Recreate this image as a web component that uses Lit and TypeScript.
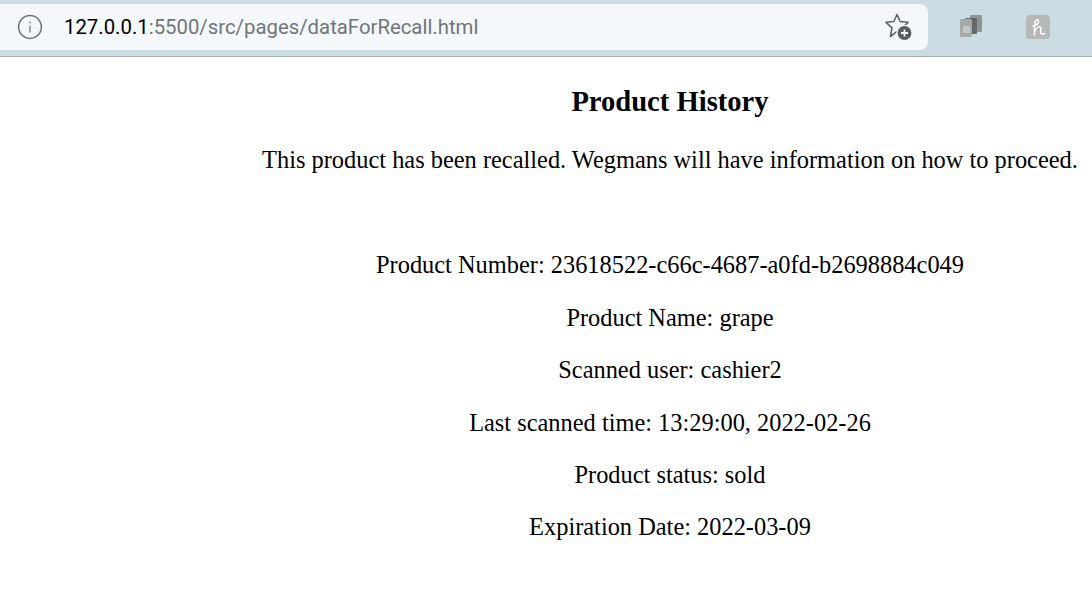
import { LitElement, html, css } from "lit";
import { customElement } from "lit/decorators.js";

@customElement("app-root")
export class AppRoot extends LitElement {
  static styles = css`
    :host { display: block; width: 1092px; height: 596px; overflow: hidden; background: #fff; color: #000; font-family: "Liberation Serif", serif; }
    .chrome { height: 57px; box-sizing: border-box; background: #cbdde2; border-bottom: 1px solid #a3b1b5; padding: 4px 0 6px 0; display: flex; align-items: stretch; }
    .omni { width: 928px; background: #f4f8fa; border-radius: 0 8px 8px 0; display: flex; align-items: center; box-sizing: border-box; padding-left: 17px; }
    .info { width: 26px; height: 26px; flex: none; }
    .url { margin-left: 21px; font-family: "Roboto", "Open Sans", sans-serif; font-size: 20.35px; color: #70757a; flex: 1; }
    .url b { font-weight: 400; color: #000; }
    .star { width: 30px; height: 30px; flex: none; margin-right: 14px; }
    .ext { display: flex; align-items: center; }
    .ext svg { flex: none; }
    .e1 { margin-left: 32px; }
    .e2 { margin-left: 42px; }
    main { margin-left: 248px; text-align: center; }
    h1 { font-size: 28.6px; font-weight: 700; margin: 29px 0 0; line-height: 32px; }
    p { font-size: 24.4px; line-height: 27px; margin: 25.4px 0 0; white-space: nowrap; }
    .lead { margin-top: 28.4px; }
    .gap { margin-top: 78px; }
  `;
  render() {
    return html`
      <div class="chrome">
        <div class="omni">
          <svg class="info" viewBox="0 0 26 26" fill="none" stroke="#6f7377" stroke-width="1.5">
            <circle cx="13" cy="13" r="11.4"></circle>
            <path d="M13 11.5v7M13 7.5v2" stroke-width="1.2"></path>
          </svg>
          <div class="url"><b>127.0.0.1</b>:5500/src/pages/dataForRecall.html</div>
          <svg class="star" viewBox="0 0 30 30">
            <path d="M13 2.5L16.2 9.5 24 10.3 18.4 15.5 20 23 13 19.3 6.4 24.5 8 15.8 2 10.3 9.8 9.5Z" fill="none" stroke="#5f6368" stroke-width="1.6" stroke-linejoin="round"></path>
            <circle cx="20.5" cy="21" r="7.6" fill="#595c60" stroke="#f4f8fa" stroke-width="1.4"></circle>
            <path d="M20.5 17.4v7.2M16.9 21h7.2" stroke="#f4f8fa" stroke-width="1.8"></path>
          </svg>
        </div>
        <div class="ext">
          <svg class="e1" width="24" height="24" viewBox="0 0 24 24">
            <rect x="10" y="0" width="12" height="17" rx="1" fill="#8d9496"></rect>
            <rect x="5" y="3" width="12" height="16" rx="1" fill="#65696c"></rect>
            <rect x="0" y="4" width="12" height="18" rx="1.5" fill="#a6a9a9"></rect>
            <rect x="3" y="11" width="7" height="7" fill="#c2c6c6"></rect>
          </svg>
          <svg class="e2" width="24" height="24" viewBox="0 0 24 24">
            <rect width="24" height="24" rx="3.5" fill="#b5b9ba"></rect>
            <path d="M8.5 20C8.5 14 8 9 9.5 6 10.5 4 13 4.5 12.5 7 12 9 10 10.5 7 11M9 16C10.5 13 13 11 14.5 12 16 13 14.5 15.5 14.5 17 14.5 19 16.5 19.5 18.5 18.5" fill="none" stroke="#fff" stroke-width="1.5" stroke-linecap="round" stroke-linejoin="round"></path>
          </svg>
        </div>
      </div>
      <main>
        <h1>Product History</h1>
        <p class="lead">This product has been recalled. Wegmans will have information on how to proceed.</p>
        <p class="gap">Product Number: 23618522-c66c-4687-a0fd-b2698884c049</p>
        <p>Product Name: grape</p>
        <p>Scanned user: cashier2</p>
        <p>Last scanned time: 13:29:00, 2022-02-26</p>
        <p>Product status: sold</p>
        <p>Expiration Date: 2022-03-09</p>
      </main>
    `;
  }
}
